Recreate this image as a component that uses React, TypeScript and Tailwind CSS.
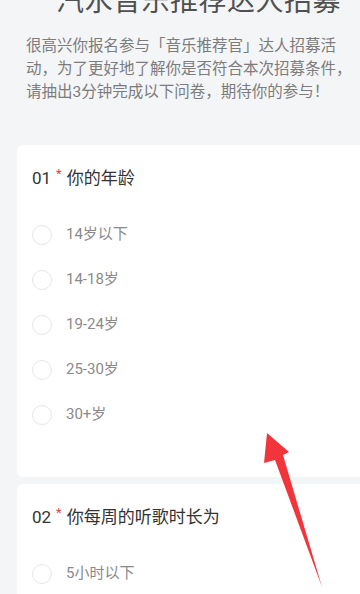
const AGE_OPTIONS = ["14岁以下", "14-18岁", "19-24岁", "25-30岁", "30+岁"];

function Radio({ label }: { label: string }) {
  return (
    <div className="flex h-[45px] items-center">
      <span className="ml-[15px] h-[20px] w-[20px] rounded-full border border-[#e6e6e6] bg-white" />
      <span className="ml-[14px] text-[15px] leading-none text-[#8a8a8a]">{label}</span>
    </div>
  );
}

function Question({
  no,
  title,
  options,
  last,
}: {
  no: string;
  title: string;
  options: string[];
  last?: boolean;
}) {
  return (
    <section
      className={
        "ml-[17px] -mr-6 rounded-md bg-white pl-[15px] pt-[21px] " +
        (last ? "pb-[20px]" : "pb-[40px]")
      }
    >
      <h2 className="flex h-[24px] items-center text-[17px] leading-[24px] text-[#333333]">
        <span>{no}</span>
        <span className="mx-[5px] -mt-[8px] text-[13px] text-[#e8403f]">*</span>
        <span>{title}</span>
      </h2>
      <div className="mt-[22px] -ml-[15px]">
        {options.map((o) => (
          <Radio key={o} label={o} />
        ))}
      </div>
    </section>
  );
}

export default function App() {
  return (
    <div
      className="relative h-[594px] w-[360px] overflow-hidden bg-[#f4f5f7]"
      style={{ fontFamily: 'Roboto, "Noto Sans CJK SC", sans-serif' }}
    >
      <h1 className="-mt-[12px] ml-[56px] whitespace-nowrap text-[28px] leading-[28px] tracking-[0.5px] text-[#505050]">
        汽水音乐推荐达人招募
      </h1>
      <p className="ml-[26px] mt-[19px] whitespace-nowrap text-[15.5px] leading-[23px] text-[#7c7c7c]">
        很高兴你报名参与「音乐推荐官」达人招募活
        <br />
        动，为了更好地了解你是否符合本次招募条件，
        <br />
        请抽出3分钟完成以下问卷，期待你的参与！
      </p>

      <div className="mt-[41px] flex flex-col gap-[7px]">
        <Question no="01" title="你的年龄" options={AGE_OPTIONS} />
        <Question no="02" title="你每周的听歌时长为" options={["5小时以下", "5-10小时"]} last />
      </div>

      <svg
        className="pointer-events-none absolute left-0 top-0"
        width="360"
        height="594"
        viewBox="0 0 360 594"
      >
        <polygon
          points="267,433 289,452 283,455 322,587 275,460 264,463"
          fill="#f2353a"
        />
      </svg>
    </div>
  );
}
